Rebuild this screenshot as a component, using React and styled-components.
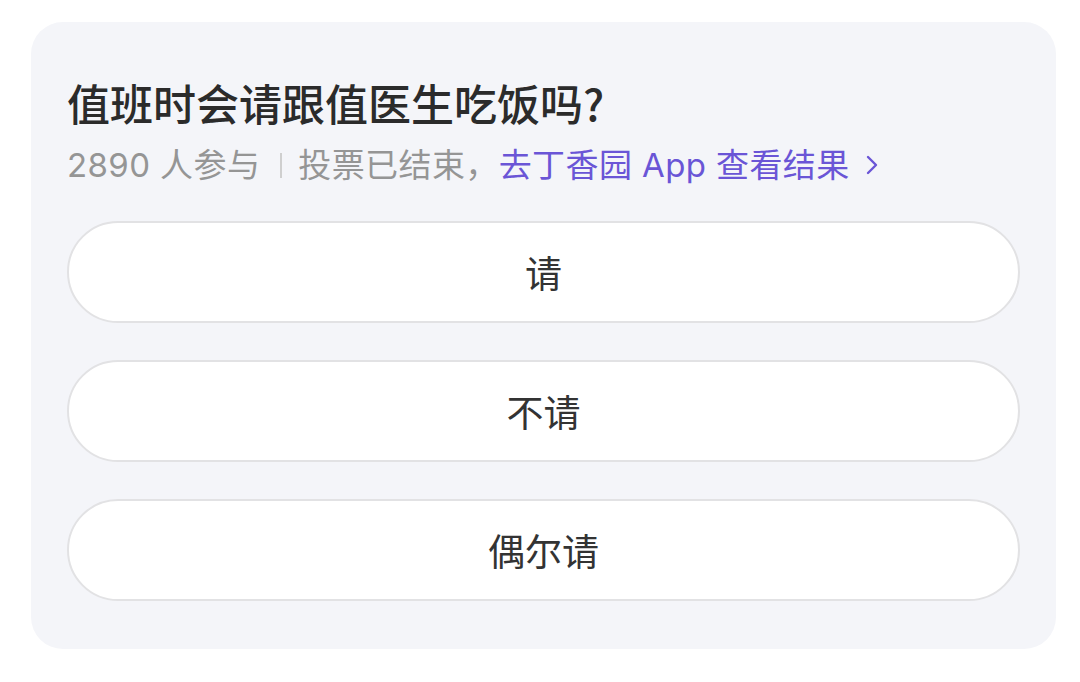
import React from 'react';
import styled, { createGlobalStyle } from 'styled-components';

const GlobalStyle = createGlobalStyle`
  html, body {
    margin: 0;
    padding: 0;
    background: #ffffff;
  }
  body {
    font-family: Inter, "Noto Sans CJK SC", sans-serif;
  }
`;

const Page = styled.div`
  width: 1080px;
  height: 682px;
  padding: 22px 24px 0 31px;
  box-sizing: border-box;
`;

const Card = styled.div`
  width: 1025px;
  box-sizing: border-box;
  background: #f4f5f9;
  border-radius: 32px;
  padding: 54px 36px 48px 36px;
`;

const Title = styled.h1`
  margin: 0;
  font-family: "Noto Sans CJK SC", sans-serif;
  font-size: 43px;
  line-height: 52px;
  font-weight: 500;
  color: #2b2b2b;
`;

const Meta = styled.div`
  display: flex;
  align-items: center;
  margin-top: 15px;
  font-family: Inter, "Noto Sans CJK SC", sans-serif;
  font-size: 33px;
  line-height: 44px;
  letter-spacing: 0.4px;
  color: #959595;
  white-space: nowrap;
`;

const Divider = styled.span`
  display: inline-block;
  width: 2px;
  height: 25px;
  background: #cfcfcf;
  margin: 0 16px 0 20px;
`;

const Link = styled.a`
  display: inline-flex;
  align-items: center;
  color: #6a55d6;
  text-decoration: none;
  svg {
    margin-left: 16px;
  }
`;

const Options = styled.div`
  display: flex;
  flex-direction: column;
  gap: 37px;
  margin-top: 34px;
`;

const Option = styled.button`
  height: 102px;
  width: 100%;
  box-sizing: border-box;
  border: 2px solid #e2e2e4;
  border-radius: 51px;
  background: #ffffff;
  font-family: "Noto Sans CJK SC", sans-serif;
  font-size: 37px;
  color: #333333;
  cursor: pointer;
`;

const options = ['请', '不请', '偶尔请'];

const App = () => {
  return (
    <Page>
      <GlobalStyle />
      <Card>
        <Title>值班时会请跟值医生吃饭吗?</Title>
        <Meta>
          <span>2890 人参与</span>
          <Divider />
          <span>投票已结束，</span>
          <Link href="#">
            去丁香园 App 查看结果
            <svg width="12" height="20" viewBox="0 0 12 20">
              <path d="M2 2 L10 10 L2 18" fill="none" stroke="#6a55d6" strokeWidth="2.4" strokeLinecap="round" strokeLinejoin="round" />
            </svg>
          </Link>
        </Meta>
        <Options>
          {options.map((o) => (
            <Option key={o}>{o}</Option>
          ))}
        </Options>
      </Card>
    </Page>
  );
};

export default App;
